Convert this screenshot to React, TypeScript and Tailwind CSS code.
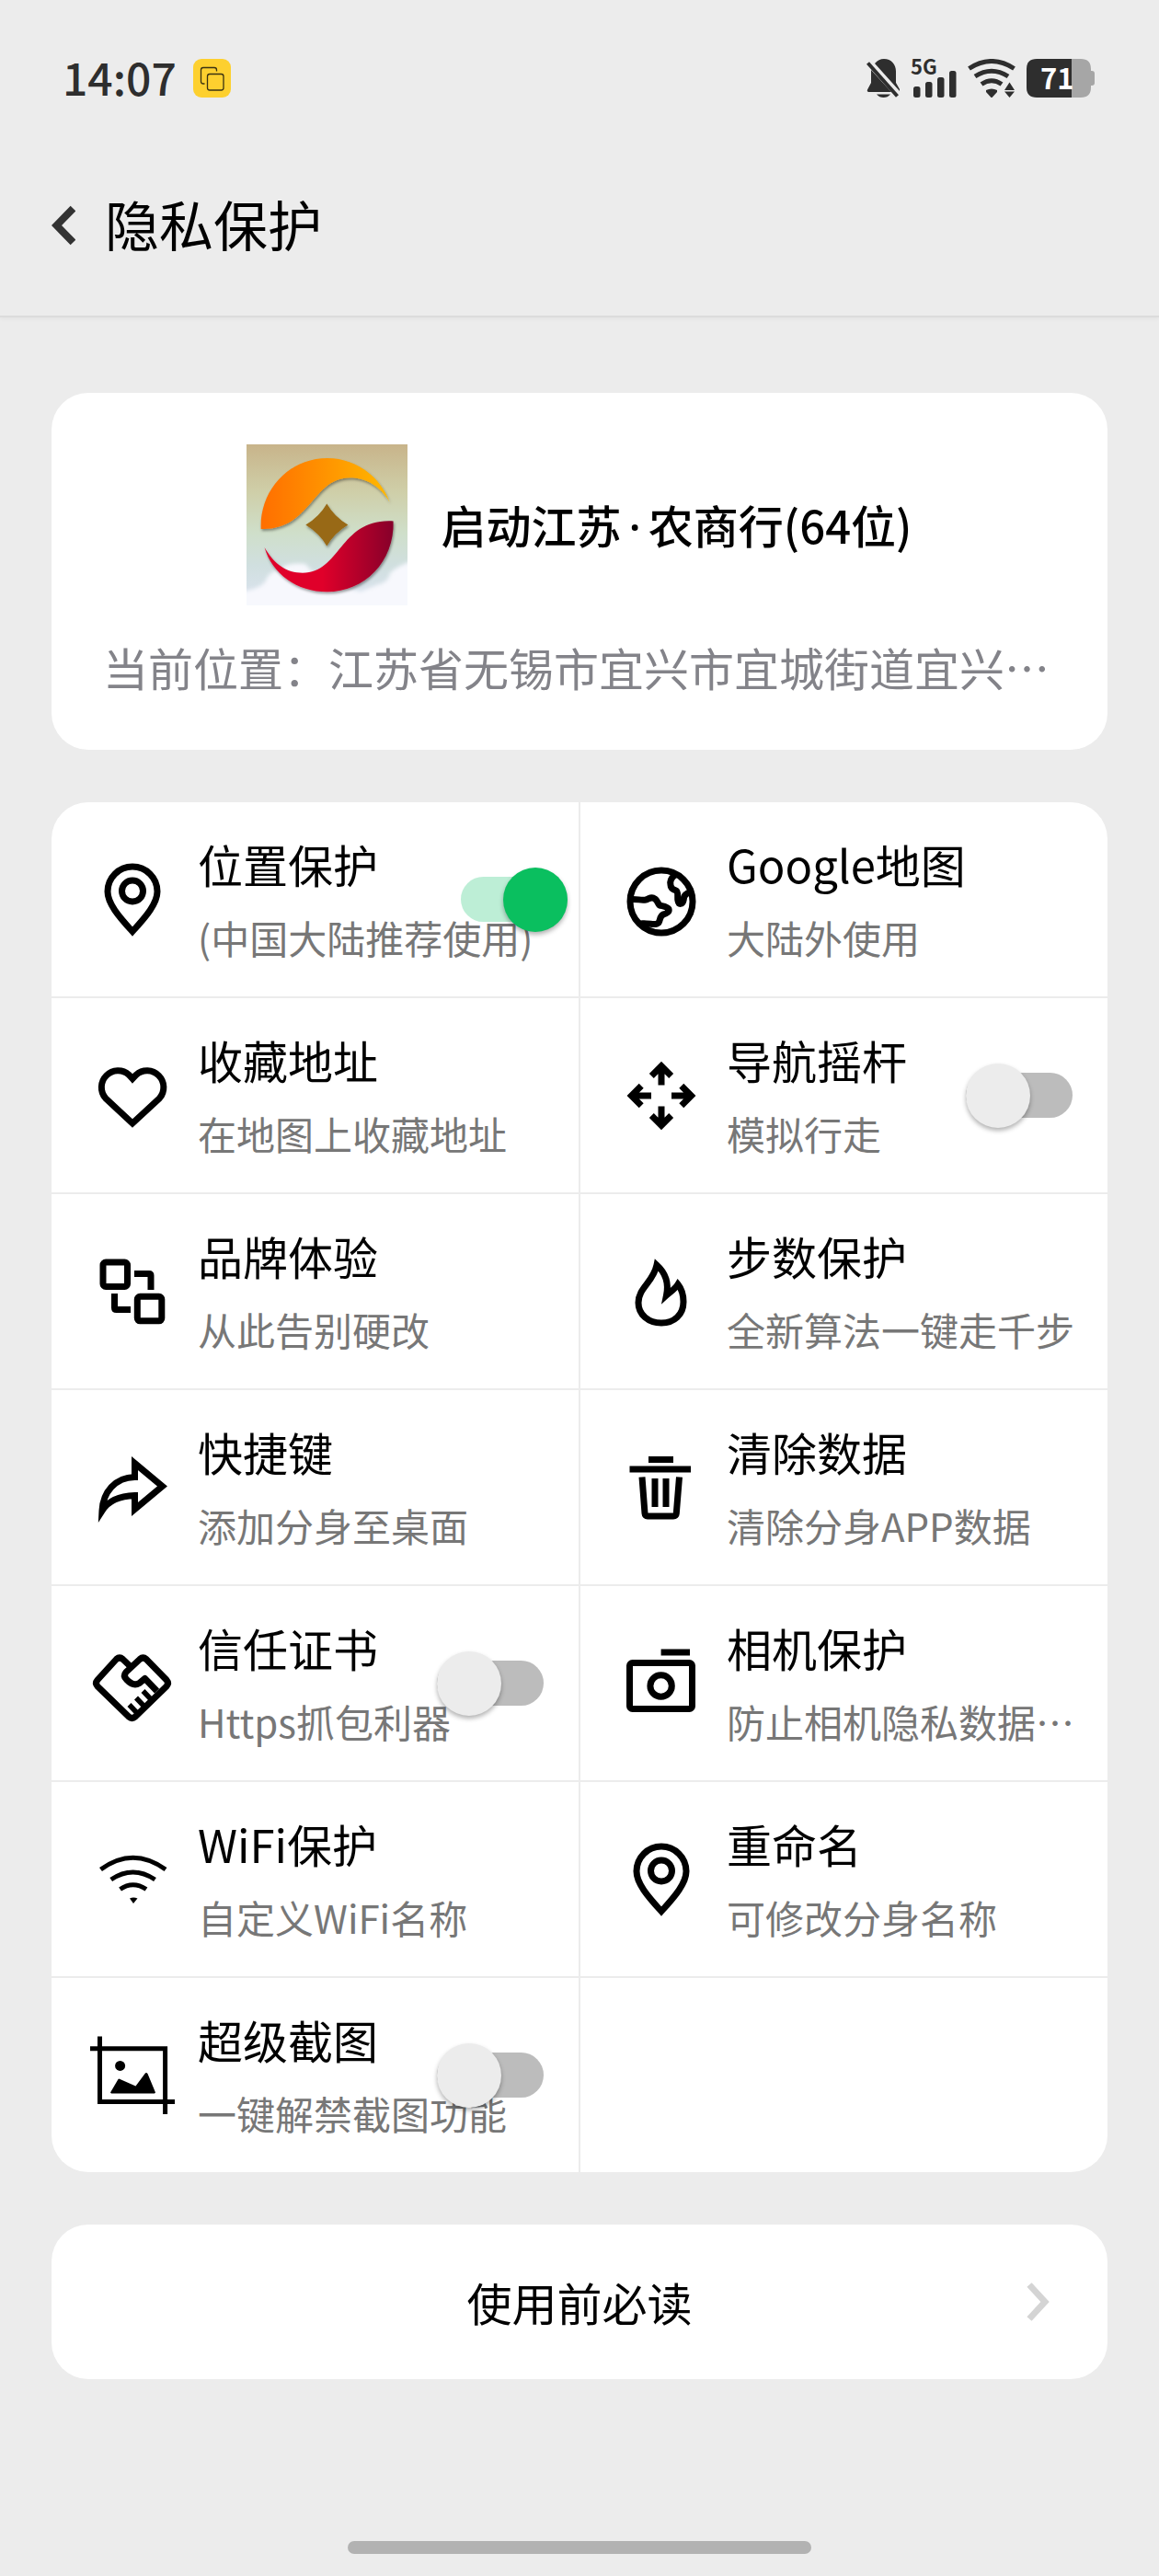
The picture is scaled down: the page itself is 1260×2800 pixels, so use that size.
import { useState } from "react";
import type { ReactNode } from "react";
import clsx from "clsx";

interface Feature {
  id: string;
  title: string;
  desc: string;
  icon: ReactNode;
  toggle?: boolean;
  enabled?: boolean;
  wide?: boolean;
}

interface IconProps {
  children: ReactNode;
  strokeWidth?: number;
}

const Icon: React.FC<IconProps> = ({ children, strokeWidth = 7 }) => (
  <svg
    viewBox="0 0 100 100"
    fill="none"
    stroke="#000"
    strokeWidth={strokeWidth}
    strokeMiterlimit={10}
    className="size-[100px] shrink-0"
    aria-hidden="true"
  >
    {children}
  </svg>
);

const PinIcon = () => (
  <Icon>
    <path d="M50 84.5C35 68 23 54 23 41a27 27 0 0 1 54 0C77 54 65 68 50 84.5Z" />
    <circle cx="50" cy="40.5" r="11.5" />
  </Icon>
);

const GlobeIcon = () => (
  <Icon>
    <circle cx="50" cy="52" r="34" />
    <path
      strokeLinejoin="round"
      d="M17 49.5C24 49 28 51 33 50c4-1 6-4 10-1 3 2 3 5 5 7 4 1 8 1 10 4 1 3-2 5-6 6-4 2-3 6-5 9-3 3-8 1-13 1-4 0-7-1-9 1"
    />
    <path
      strokeLinejoin="round"
      d="M65 23c-4 3-6 7-5 11 0 4 3 5 6 6 3 2 1 7 2 11 1 5 5 4 6 0 1-4 0-5 3-7 2-2 4-2 6-3"
    />
  </Icon>
);

const HeartIcon = () => (
  <Icon>
    <path d="M50 31.5 46.2 27.3A18 18 0 0 0 20.8 52.7L50 80 79.4 52.7A18 18 0 0 0 54 27.3Z" />
  </Icon>
);

const ArrowsIcon = () => (
  <Icon>
    <path d="M50 38.5V18M39.3 28.5 50 17.8l10.7 10.7" />
    <path d="M50 61.5V82M39.3 71.5 50 82.2l10.7-10.7" />
    <path d="M39 50H18M28.2 39.3 17.5 50l10.7 10.7" />
    <path d="M61 50h21M71.8 39.3 82.5 50 71.8 60.7" />
  </Icon>
);

const SwapIcon = () => (
  <Icon>
    <rect x="18" y="18" width="26.5" height="26.5" rx="3" />
    <rect x="55.3" y="55.3" width="26.5" height="26.5" rx="3" />
    <path d="M52 30.5h16q2 0 2 2V48M30.5 52v15.5q0 2 2 2H48" />
  </Icon>
);

const FlameIcon = () => (
  <Icon>
    <path d="M45 21C41 40 25 46 25 62c0 13 11 22 25 22s24-9 24-23c0-8-2-14-6-19-3 5-8 8-12.5 12C58 42 55 30 45 21Z" />
  </Icon>
);

const ShareIcon = () => (
  <Icon>
    <path d="M52.5 23.5 82.5 48.5 52.5 73.5V58.5C36 59 24 64 17 75 18 55 31 39 52.5 38.5Z" />
  </Icon>
);

const TrashIcon = () => (
  <Icon>
    <path d="M36 19.5h27M15.5 30H82" />
    <path d="M29 38.5 32 78q.3 3 3 3h28q3 0 3.3-3l3.2-39.5" />
    <path d="M43 40v31M55 40v31" />
  </Icon>
);

const HandshakeIcon = () => (
  <Icon>
    <path
      strokeLinejoin="round"
      d="M49.5 33 39.5 23.500q-3.500-3-7 0L12 46q-3 3.500 0 7l34 33q3.500 3 7 0l34-33q3-3.500 0-7L65 23.500q-3.500-3-7 0L43 37.500q-3.500 4 .5 8 7.500 8 14 4l6-5L76.500 58"
    />
    <path strokeWidth="5.5" d="m61.500 58 9 9.500M54 65.500l9 9.500M46.500 73l9 9.500" />
  </Icon>
);

const CameraIcon = () => (
  <Icon>
    <path d="M49.6 16H81" />
    <rect x="15.5" y="27.5" width="68" height="50" rx="3" />
    <circle cx="49.6" cy="52.5" r="11.7" />
  </Icon>
);

const WifiIcon = () => (
  <Icon strokeWidth={5}>
    <path d="M15.5 39Q50.5 13.5 86 39M26.7 50Q50.5 34 74.5 50M36.6 60.5Q50.5 51 65 60.5" />
    <path d="M47 70.5q4-2 8.5 0L51 76Z" fill="#000" stroke="none" />
  </Icon>
);

const CropIcon = () => (
  <Icon strokeWidth={5}>
    <path d="M14.5 7.5v71H96M4 20.7h81.6V92" />
    <circle cx="36.6" cy="39.4" r="5.5" fill="#000" stroke="none" />
    <path d="M26 68.5 34.5 54q1-1 2 0l17 7.5L63.5 48q1.5-2 3 0L75 68.5 74 69.5H27Z" fill="#000" stroke="none" />
  </Icon>
);

const features: Feature[] = [
  { id: "location", title: "位置保护", desc: "(中国大陆推荐使用)", icon: <PinIcon />, toggle: true, enabled: true, wide: true },
  { id: "google", title: "Google地图", desc: "大陆外使用", icon: <GlobeIcon /> },
  { id: "favorite", title: "收藏地址", desc: "在地图上收藏地址", icon: <HeartIcon /> },
  { id: "joystick", title: "导航摇杆", desc: "模拟行走", icon: <ArrowsIcon />, toggle: true },
  { id: "brand", title: "品牌体验", desc: "从此告别硬改", icon: <SwapIcon /> },
  { id: "steps", title: "步数保护", desc: "全新算法一键走千步", icon: <FlameIcon /> },
  { id: "shortcut", title: "快捷键", desc: "添加分身至桌面", icon: <ShareIcon /> },
  { id: "clear", title: "清除数据", desc: "清除分身APP数据", icon: <TrashIcon /> },
  { id: "cert", title: "信任证书", desc: "Https抓包利器", icon: <HandshakeIcon />, toggle: true },
  { id: "camera", title: "相机保护", desc: "防止相机隐私数据泄露", icon: <CameraIcon /> },
  { id: "wifi", title: "WiFi保护", desc: "自定义WiFi名称", icon: <WifiIcon /> },
  { id: "rename", title: "重命名", desc: "可修改分身名称", icon: <PinIcon /> },
  { id: "screenshot", title: "超级截图", desc: "一键解禁截图功能", icon: <CropIcon />, toggle: true },
];

const StatusBar = () => (
  <div className="flex items-center justify-between pt-16 pr-[70px] pl-[68px] text-[#2e2e2e]">
    <div className="flex items-start gap-[18px]">
      <span className="text-[48px] leading-[38px] font-medium">14:07</span>
      <svg viewBox="0 0 41 42" className="h-[42px] w-[41px]" aria-hidden="true">
        <rect width="41" height="42" rx="9" fill="#fdd02f" />
        <g fill="none" stroke="#3a3212" strokeWidth="1.3">
          <path d="M12.5 27H11q-2.5 0-2.5-2.5V12q0-2.5 2.5-2.5h12q2.5 0 2.5 2.5v1.5" />
          <rect x="15.5" y="16.5" width="17.5" height="17.5" rx="2.5" />
        </g>
      </svg>
    </div>
    <div className="flex items-center">
      <svg viewBox="0 0 36 42" className="mr-3 h-[42px] w-9" fill="#2e2e2e" aria-hidden="true">
        <path d="M9 5C12 1.5 15 0 19 0c8 0 13 6 13 13.5V26l4 7v2Z" />
        <path d="M5 12 27 36H2q-2-1-1-2.5L5 26Z" />
        <path d="M11 38.5h15q-3 3.5-7.5 3.5T11 38.5Z" />
        <path d="M1.5 4.5 33.5 40.5" stroke="#2e2e2e" strokeWidth="4" />
      </svg>
      <svg viewBox="0 0 50 42" className="mr-3 h-[42px] w-[50px] overflow-visible" fill="#2e2e2e" aria-hidden="true">
        <text x="0" y="17" fontSize="22" fontWeight="700">5G</text>
        <rect x="3" y="30" width="7.5" height="12" rx="2.5" />
        <rect x="16" y="25" width="7.5" height="17" rx="2.5" />
        <rect x="29" y="20" width="7.5" height="22" rx="2.5" />
        <rect x="42" y="13" width="7.5" height="29" rx="2.5" />
      </svg>
      <svg viewBox="0 0 52 42" className="mr-3 h-[42px] w-[52px]" fill="none" stroke="#2e2e2e" strokeWidth="5" aria-hidden="true">
        <path d="M1.5 10.5Q26-5.5 50.5 10.5M8 19Q26 7.5 44 19M15 27.5Q26 20 37 27.5" />
        <g fill="#2e2e2e" stroke="none">
          <path d="M20 34q6-3 12 0v2l-5 5.5q-1 1-2 0L20 36Z" />
          <path d="M45.5 25.5 51 34H40ZM45.5 42 40 35.5h11Z" />
        </g>
      </svg>
      <svg viewBox="0 0 74 42" className="h-[42px] w-[74px] overflow-visible" aria-label="71">
        <path d="M49 0h10q11 0 11 11v2h1q3 0 3 3v10q0 3-3 3h-1v2q0 11-11 11H49Z" fill="#a6a6a6" />
        <path d="M11 0h38v42H11Q0 42 0 31V11Q0 0 11 0Z" fill="#2e2e2e" />
        <text x="15" y="33" fontSize="31" fontWeight="700" fill="#fff">71</text>
      </svg>
    </div>
  </div>
);

const AppLogo = () => (
  <svg viewBox="0 0 175 175" className="size-[175px] shrink-0" aria-hidden="true">
    <defs>
      <linearGradient id="sky" x1="0" y1="0" x2="0" y2="1">
        <stop offset="0" stopColor="#c8b48a" />
        <stop offset="0.3" stopColor="#cfcfa9" />
        <stop offset="0.55" stopColor="#cfdfca" />
        <stop offset="0.75" stopColor="#d0dfdf" />
        <stop offset="1" stopColor="#dde4f2" />
      </linearGradient>
      <linearGradient id="orange" x1="0" y1="0" x2="1" y2="0">
        <stop offset="0" stopColor="#ff6e00" />
        <stop offset="1" stopColor="#ffb900" />
      </linearGradient>
      <linearGradient id="red" x1="0" y1="0" x2="1" y2="0">
        <stop offset="0.45" stopColor="#e0002c" />
        <stop offset="1" stopColor="#86002c" />
      </linearGradient>
      <filter id="soft">
        <feGaussianBlur stdDeviation="2" />
      </filter>
      <filter id="drop" x="-10%" y="-10%" width="120%" height="120%">
        <feDropShadow dx="1" dy="2" stdDeviation="1.5" floodOpacity="0.4" />
      </filter>
      <clipPath id="frame">
        <rect width="175" height="175" />
      </clipPath>
    </defs>
    <rect width="175" height="175" fill="url(#sky)" />
    <g clipPath="url(#frame)">
      <path
        d="M-6 160q18-2 26-10 4-12 16-14 8-8 28-6 10 12 20 20l40 10 20-8q10-2 12-12 8-8 26-14v56H-6Z"
        fill="#f7f8fd"
        filter="url(#soft)"
      />
    </g>
    <g filter="url(#drop)">
      <path
        d="M15.7 92C14 50 46 15 88 15c30 0 57 19 67.8 48-9.8-17-25.8-26.7-43.3-26.7C71 36.3 70 94 15.7 92Z"
        fill="url(#orange)"
      />
      <path
        d="M159.6 83.5C161 128 128 160.3 87.6 160.3 55 160.3 28 141 19.5 112 30 130 43 139.7 61 139.7 103 139.7 101 80 159.6 83.5Z"
        fill="url(#red)"
      />
      <path d="M87.3 64.5q8 14 23 23-15 9-23 23-8-14-23-23 15-9 23-23Z" fill="#986914" />
    </g>
  </svg>
);

const Switch: React.FC<{ checked: boolean }> = ({ checked }) => (
  <span className="relative flex h-[70px] w-[116px] items-center">
    <span
      className={clsx(
        "h-[49px] w-full rounded-full",
        checked ? "bg-[#bdeed6]" : "bg-[#bcbcbc]"
      )}
    />
    <span
      className={clsx(
        "absolute top-0 size-[70px] rounded-full shadow-[0_3px_5px_rgba(0,0,0,0.3)]",
        checked ? "right-0 bg-[#0abf5f]" : "left-0 bg-[#ececec]"
      )}
    />
  </span>
);

const FeatureBody: React.FC<{ feature: Feature }> = ({ feature }) => (
  <>
    {feature.icon}
    <span className="block min-w-0 flex-1 pb-1">
      <span className="block truncate text-[49px] leading-[72px] text-black">{feature.title}</span>
      <span className="mt-3.5 block truncate text-[42px] leading-[60px] text-[#777]">{feature.desc}</span>
    </span>
  </>
);

const FeatureTile: React.FC<{ feature: Feature }> = ({ feature }) => {
  const [checked, setChecked] = useState(Boolean(feature.enabled));
  const tile = "relative flex h-[211px] items-center gap-[21px] bg-white pr-8 pl-[38px] text-left";

  if (!feature.toggle) {
    return (
      <button type="button" className={tile}>
        <FeatureBody feature={feature} />
      </button>
    );
  }

  return (
    <label className={tile}>
      <FeatureBody feature={feature} />
      <input
        type="checkbox"
        role="switch"
        className="sr-only"
        checked={checked}
        onChange={(e) => setChecked(e.target.checked)}
      />
      <span
        className={clsx(
          "absolute inset-y-0 flex items-center",
          feature.wide ? "right-3" : "right-[38px]"
        )}
      >
        <Switch checked={checked} />
      </span>
    </label>
  );
};

const App: React.FC = () => {
  return (
    <div
      lang="zh-CN"
      className="flex min-h-screen flex-col bg-[#ececec] font-['Noto_Sans_CJK_SC',sans-serif] text-black"
    >
      <header className="border-b-2 border-[#dcdcdc] shadow-[0_2px_4px_rgba(0,0,0,0.04)]">
        <StatusBar />
        <div className="flex items-center gap-8 px-14 pt-[98px] pb-[57px]">
          <button type="button" aria-label="返回">
            <svg viewBox="0 0 26 44" className="h-11 w-[26px]" fill="none" stroke="#333" strokeWidth="8" aria-hidden="true">
              <path d="M23.5 3.5 5.5 22l18 18.5" />
            </svg>
          </button>
          <h1 className="pb-1 text-[59px] leading-[78px]">隐私保护</h1>
        </div>
      </header>

      <main className="flex flex-col gap-[57px] px-14 pt-[82px]">
        <section className="rounded-[40px] bg-white px-14 pt-14 pb-[54px]">
          <button type="button" className="flex w-full items-center justify-center gap-9">
            <AppLogo />
            <span className="text-[49px] leading-[72px] font-medium">
              启动江苏<span className="px-2 font-['Noto_Sans']">·</span>农商行(64位)
            </span>
          </button>
          <p className="mt-[31px] truncate text-[49px] leading-[72px] text-[#838389]">
            当前位置：江苏省无锡市宜兴市宜城街道宜兴大道
          </p>
        </section>

        <section className="grid grid-cols-2 gap-0.5 overflow-hidden rounded-[40px] bg-[#ececec]">
          {features.map((feature) => (
            <FeatureTile key={feature.id} feature={feature} />
          ))}
          <div className="bg-white" />
        </section>

        <button
          type="button"
          className="relative flex h-[168px] items-center justify-center rounded-[40px] bg-white text-[49px] leading-[72px]"
        >
          使用前必读
          <svg
            viewBox="0 0 26 44"
            className="absolute right-[62px] h-11 w-[26px]"
            fill="none"
            stroke="#d4d4d4"
            strokeWidth="7"
            aria-hidden="true"
          >
            <path d="M3 3.5 20 22 3 40.5" />
          </svg>
        </button>
      </main>

      <div className="mx-auto mt-auto mb-6 h-[14px] w-2/5 rounded-full bg-[#b2b2b2]" />
    </div>
  );
};

export default App;
